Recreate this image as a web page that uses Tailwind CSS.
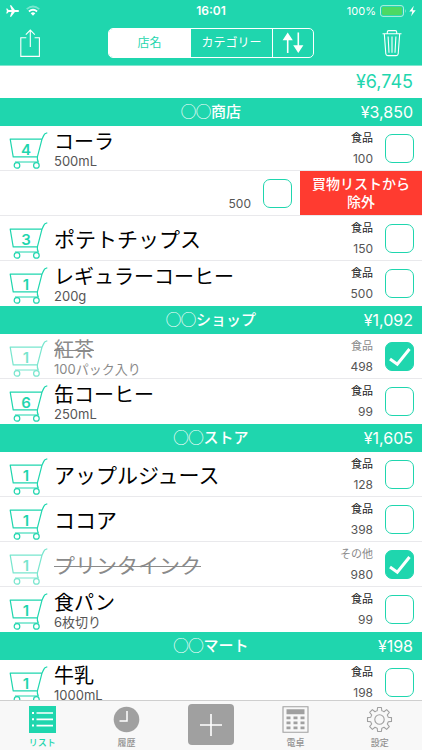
<!DOCTYPE html>
<html lang="ja">
<head>
<meta charset="utf-8">
<meta name="viewport" content="width=device-width, initial-scale=1">
<title>買物リスト</title>
<script src="https://cdn.jsdelivr.net/npm/@tailwindcss/browser@4"></script>
</head>
<body class="flex h-screen flex-col overflow-hidden bg-white font-['Inter','Noto_Sans_CJK_JP',sans-serif] text-black">

<svg class="hidden" aria-hidden="true">
  <symbol id="cart" viewBox="0 -6 40 44">
    <g fill="none" stroke="currentColor" stroke-width="1.2" stroke-linejoin="round">
      <path d="M39.3 .8 L37 1.8 Q36 2.6 34 7.2 L29.4 24.8 H5.2 L2.2 7.2 H34 M29.4 24.8 Q29 27.5 30.3 30 H7"/>
      <circle cx="9" cy="33.4" r="2.8"/>
      <circle cx="28.4" cy="33.4" r="2.8"/>
    </g>
  </symbol>
  <symbol id="tick" viewBox="0 0 29 29">
    <path d="M5 17 L12.3 22.3 L24.5 7" fill="none" stroke="#fff" stroke-width="3"/>
  </symbol>
</svg>

<header class="shrink-0 border-b border-[#7fe6cf] bg-[#1fd6ae] text-white">
  <div class="grid h-5 grid-cols-3 items-center px-1.5 pt-0.5 text-xs leading-4">
    <div class="flex items-center gap-1.5">
      <svg class="h-3 w-3.5" viewBox="0 0 14 12" fill="#fff" aria-label="機内モード"><path d="M13.2 6 Q13 5.1 11.8 5 L8.9 5 L5.2 .3 H3.9 L5.6 5 L2.6 5.1 L1.3 3.6 H.2 L.9 6 L.2 8.4 H1.3 L2.6 6.9 L5.6 7 L3.9 11.7 H5.2 L8.9 7 L11.8 7 Q13 6.9 13.2 6Z"/></svg>
      <svg class="h-3 w-3.5" viewBox="0 0 14 12" fill="none" stroke="#fff" aria-label="Wi-Fi"><path d="M.7 4.2 Q7 -1.2 13.3 4.2" stroke-width="1.7" opacity=".4"/><path d="M2.9 6.5 Q7 3.1 11.1 6.5" stroke-width="1.8"/><path d="M4.7 8.2 Q7 6.3 9.3 8.2 L7 10.7Z" fill="#fff" stroke="none"/></svg>
    </div>
    <div class="text-center font-semibold">16:01</div>
    <div class="flex items-center justify-end gap-1">
      <span class="text-[11px]">100%</span>
      <svg class="h-3 w-9" viewBox="0 0 36 12" aria-label="充電中"><rect x=".5" y=".6" width="23" height="10.8" rx="2.5" fill="none" stroke="#b4f0e1"/><rect x="2" y="2.1" width="20" height="7.8" rx="1.3" fill="#4cd964"/><path d="M25 4 Q26.3 6 25 8Z" fill="#b4f0e1"/><path d="M33.8 .8 L29.3 6.6 H32.3 L31.1 11.2 L35.7 5.2 H32.7Z" fill="#fff"/></svg>
    </div>
  </div>
  <div class="flex h-[45px] items-center justify-between px-5">
    <button class="w-5" aria-label="共有">
      <svg class="h-7 w-5" viewBox="0 0 20 28" fill="none" stroke="#fff" stroke-width="1.1"><path d="M6.3 8.7 H.8 V27.4 H19.4 V8.7 H14.6 M10.3 18 V1.3 M5.8 5.6 L10.3 1.1 L14.8 5.6"/></svg>
    </button>
    <div class="flex h-[30px] w-[206px] divide-x divide-white overflow-hidden rounded-[5px] border border-white text-xs">
      <button class="flex-1 bg-white text-[#1fd6ae]">店名</button>
      <button class="flex-1">カテゴリー</button>
      <button class="grid w-10 place-items-center" aria-label="並べ替え">
        <svg class="h-[22px] w-[22px]" viewBox="0 0 22 22" fill="#fff"><path d="M5.7 .5 L10.8 8.3 H6.5 V21 H4.9 V8.3 H.6Z M16.3 21 L11.2 13.2 H15.5 V.5 H17.1 V13.2 H21.4Z"/></svg>
      </button>
    </div>
    <button class="w-5" aria-label="削除">
      <svg class="h-7 w-5" viewBox="0 0 20 28" fill="none" stroke="#fff" stroke-width="1.1"><path d="M.5 4.8 H19.5 M5.3 4.8 V3 Q5.3 1.6 6.7 1.6 H13.3 Q14.7 1.6 14.7 3 V4.8 M2.3 4.8 L3.8 24.8 Q4 26.6 5.8 26.6 H14.2 Q16 26.6 16.2 24.8 L17.7 4.8 M6.1 7.5 L7 23.8 M10 7.5 V23.8 M13.9 7.5 L13 23.8"/></svg>
    </button>
  </div>
</header>

<main id="list" class="min-h-0 flex-1 overflow-hidden">
  <p class="flex h-8 items-center justify-end px-[9px] text-lg text-[#1fd6ae]">¥6,745</p>
</main>

<nav class="grid shrink-0 grid-cols-5 border-t border-[#cfcfcf] bg-[#f8f8f8] text-[9px] leading-3 font-medium text-[#929292]">
  <a href="#list" class="flex h-[49px] flex-col items-center gap-1 pt-[5px] text-[#1fd6ae]">
    <svg class="h-[27px] w-[27px]" viewBox="0 0 27 27"><path fill="currentColor" d="M0 0H27V27H0Z"/><path d="M7.5 7H24 M7.5 13.3H24 M7.5 19.6H24" stroke="#fff" stroke-width="1.7"/><path d="M3 7H5 M3 13.3H5 M3 19.6H5" stroke="#fff" stroke-width="2"/></svg>
    リスト
  </a>
  <a href="#history" class="flex h-[49px] flex-col items-center gap-1 pt-[5px]">
    <svg class="h-[27px] w-[27px]" viewBox="0 0 27 27"><circle cx="13.5" cy="13.5" r="12.8" fill="#a0a0a0"/><path d="M14 5V15H6.5" fill="none" stroke="#fff" stroke-width="1.5"/></svg>
    履歴
  </a>
  <div class="flex h-[49px] justify-center pt-[3px]">
    <button class="grid h-[41px] w-[46px] place-items-center rounded-sm bg-[#a0a0a0]" aria-label="追加">
      <svg class="h-6 w-6" viewBox="0 0 24 24"><path d="M12 1V23M1 12H23" stroke="#fff" stroke-width="1.6"/></svg>
    </button>
  </div>
  <a href="#calculator" class="flex h-[49px] flex-col items-center gap-1 pt-[5px]">
    <svg class="h-[27px] w-[27px]" viewBox="0 0 27 27" fill="#a0a0a0"><path d="M1 .7H26V26.3H1Z" fill="none" stroke="#a0a0a0" stroke-width="1.1"/><path d="M4.5 3.3H22.5V8.3H4.5Z M4.5 10.5H8.5V13.3H4.5Z M11.5 10.5H15.5V13.3H11.5Z M18.5 10.5H22.5V13.3H18.5Z M4.5 15.5H8.5V18.3H4.5Z M11.5 15.5H15.5V18.3H11.5Z M18.5 15.5H22.5V18.3H18.5Z M4.5 20.5H8.5V23.3H4.5Z M11.5 20.5H15.5V23.3H11.5Z M18.5 20.5H22.5V23.3H18.5Z"/></svg>
    電卓
  </a>
  <a href="#settings" class="flex h-[49px] flex-col items-center gap-1 pt-[5px]">
    <svg class="h-[27px] w-[27px]" viewBox="-13.5 -13.5 27 27" fill="none" stroke="#a0a0a0" stroke-width="1.1" stroke-linejoin="round"><circle r="4.7"/><path d="M8.7 -2.3 L12 -1.9 V1.9 L8.7 2.3 A9 9 0 0 1 7.78 4.53 L9.83 7.14 L7.14 9.83 L4.53 7.78 A9 9 0 0 1 2.3 8.7 L1.9 12 H-1.9 L-2.3 8.7 A9 9 0 0 1 -4.53 7.78 L-7.14 9.83 L-9.83 7.14 L-7.78 4.53 A9 9 0 0 1 -8.7 2.3 L-12 1.9 V-1.9 L-8.7 -2.3 A9 9 0 0 1 -7.78 -4.53 L-9.83 -7.14 L-7.14 -9.83 L-4.53 -7.78 A9 9 0 0 1 -2.3 -8.7 L-1.9 -12 H1.9 L2.3 -8.7 A9 9 0 0 1 4.53 -7.78 L7.14 -9.83 L9.83 -7.14 L7.78 -4.53 A9 9 0 0 1 8.7 -2.3Z"/></svg>
    設定
  </a>
</nav>

<script>
const shops = [
  { mark: '◯◯', name: '商店', total: '¥3,850', items: [
    { n: 4, name: 'コーラ', sub: '500mL', cat: '食品', price: 100 },
    { swiped: true, price: 500 },
    { n: 3, name: 'ポテトチップス', cat: '食品', price: 150 },
    { n: 1, name: 'レギュラーコーヒー', sub: '200g', cat: '食品', price: 500 } ] },
  { mark: '◯◯', name: 'ショップ', total: '¥1,092', items: [
    { n: 1, name: '紅茶', sub: '100パック入り', cat: '食品', price: 498, done: true },
    { n: 6, name: '缶コーヒー', sub: '250mL', cat: '食品', price: 99 } ] },
  { mark: '◯◯', name: 'ストア', total: '¥1,605', items: [
    { n: 1, name: 'アップルジュース', cat: '食品', price: 128 },
    { n: 1, name: 'ココア', cat: '食品', price: 398 },
    { n: 1, name: 'プリンタインク', cat: 'その他', price: 980, done: true },
    { n: 1, name: '食パン', sub: '6枚切り', cat: '食品', price: 99 } ] },
  { mark: '◯◯', name: 'マート', total: '¥198', items: [
    { n: 1, name: '牛乳', sub: '1000mL', cat: '食品', price: 198 } ] },
];

const product = i => i.swiped ? '' : `
  <span class="relative flex h-11 w-10 shrink-0 justify-center pt-4 pr-1 text-[15px] leading-4 font-semibold text-[#1fd6ae] ${i.done ? 'opacity-60' : ''}">
    <svg class="absolute inset-0 h-11 w-10"><use href="#cart"/></svg>${i.n}
  </span>
  <span class="flex min-w-0 flex-col whitespace-nowrap">
    <span class="leading-[26px] ${i.sub ? 'text-xl' : 'pt-1 text-[21px]'} ${i.done ? 'text-[#8a8a8a] line-through decoration-1' : ''}">${i.name}</span>
    ${i.sub ? `<span class="text-[13px] leading-3 ${i.done ? 'text-[#8a8a8a]' : 'text-[#555]'}">${i.sub}</span>` : ''}
  </span>`;

const row = (i, id) => `
  <li class="flex h-[45px] border-b border-[#e9e9ec] last:border-transparent">
    <label for="${id}" class="flex min-w-0 flex-1 items-center gap-1.5 pr-2 pl-2">
      ${product(i)}
      <span class="ml-auto flex shrink-0 flex-col text-right">
        <span class="h-[22px] text-[11px] leading-[22px] ${i.done ? 'text-[#8a8a8a]' : 'text-[#222]'}">${i.cat || ''}</span>
        <span class="text-xs leading-5 text-[#555]">${i.price}</span>
      </span>
      <span class="ml-1.5 grid shrink-0">
        <input id="${id}" type="checkbox" ${i.done ? 'checked' : ''} class="peer col-start-1 row-start-1 h-[29px] w-[29px] appearance-none rounded-[7px] border border-[#1fd6ae] checked:bg-[#1fd6ae]">
        <svg class="pointer-events-none invisible col-start-1 row-start-1 h-[29px] w-[29px] peer-checked:visible"><use href="#tick"/></svg>
      </span>
    </label>
    ${i.swiped ? '<button class="w-[122px] shrink-0 bg-[#ff3b30] text-sm leading-[18px] font-medium text-white">買物リストから<br>除外</button>' : ''}
  </li>`;

document.getElementById('list').insertAdjacentHTML('beforeend', shops.map((s, a) => `
  <section>
    <header class="grid h-7 grid-cols-[1fr_auto_1fr] items-center bg-[#1fd6ae] px-[9px] text-white">
      <h2 class="col-start-2 text-[15px] font-medium"><span class="font-['Noto_Sans_CJK_JP',sans-serif] font-bold">${s.mark}</span>${s.name}</h2>
      <span class="text-right text-base">${s.total}</span>
    </header>
    <ul>${s.items.map((i, b) => row(i, `item-${a}-${b}`)).join('')}</ul>
  </section>`).join(''));
</script>
</body>
</html>
